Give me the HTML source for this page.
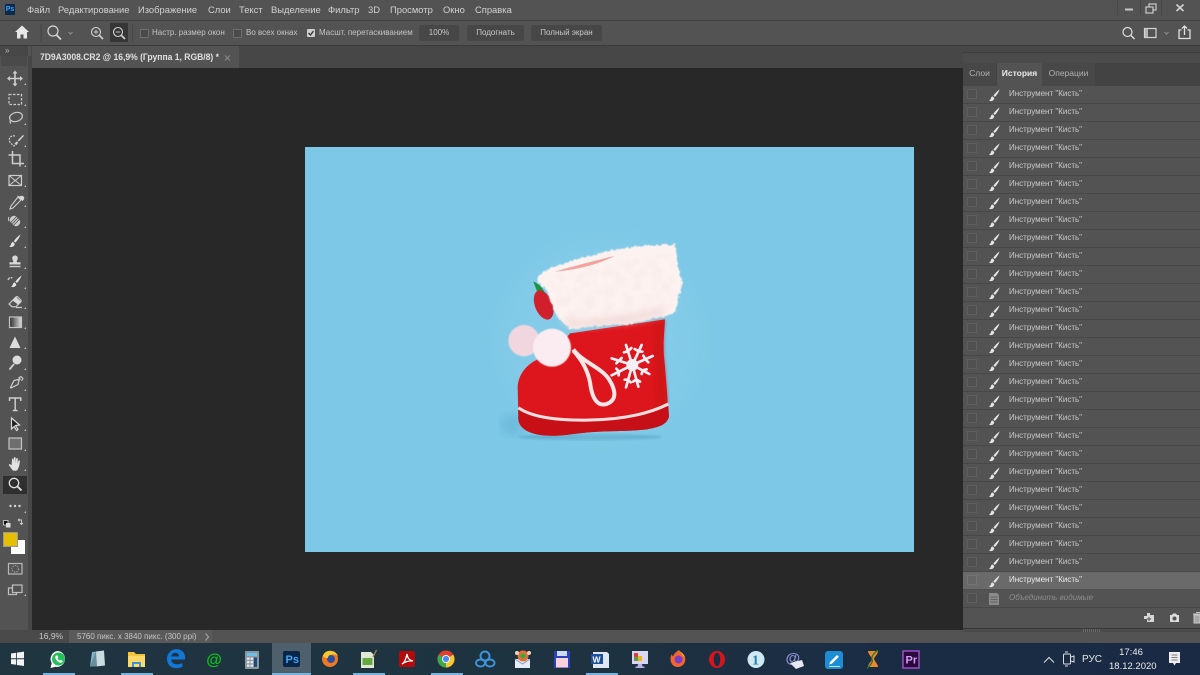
<!DOCTYPE html>
<html><head><meta charset="utf-8">
<style>
html,body{margin:0;padding:0;width:1200px;height:675px;overflow:hidden;background:#282828}
body{position:relative;font-family:"Liberation Sans","DejaVu Sans",sans-serif;color:#cfcfcf;filter:blur(.3px)}
.a{position:absolute;white-space:nowrap}
.m{top:3px;font-size:9.400px;line-height:14px;color:#d2d2d2}
.o{font-size:8px;line-height:12px;color:#c4c4c4;top:27px}
.b{top:25px;height:16px;background:#474747;border-radius:2px;font-size:8px;line-height:16px;text-align:center;color:#c8c8c8}
.cb{top:29px;width:7px;height:7px;border:1px solid #6d6d6d;background:#4a4a4a;border-radius:1px}
.r{position:relative;height:17px;border-bottom:1px solid #484848;background:#535353}
.r i{position:absolute;left:4px;top:3px;width:8px;height:8px;border:1px solid #5f5f5f;background:#505050}
.r span{position:absolute;left:46px;top:2px;font-size:8px;line-height:12px;color:#c9c9c9;font-style:normal;white-space:nowrap}
.r svg{position:absolute;left:25px;top:3px}
</style></head>
<body>
<svg width="0" height="0" style="position:absolute"><defs>
<symbol id="br" viewBox="0 0 14 14"><path d="M12.600 .4C10 2.200 7.600 4.600 5.800 7.200l1.600 1.400C9.600 6.400 11.400 3.400 12.600 .4z" fill="#e4e4e4"/><path d="M5 8C3.200 8.200 3.400 10 2.600 11.200 2.200 11.900 1.600 12.300 1.100 12.500 3 13.700 6.400 13 6.800 9.800z" fill="#e4e4e4"/></symbol>
<filter id="bl1"><feGaussianBlur stdDeviation="1.500"/></filter>
<filter id="bl2"><feGaussianBlur stdDeviation="1"/></filter>
<filter id="bl4"><feGaussianBlur stdDeviation="5"/></filter>
<filter id="bl8" x="-20%" y="-20%" width="140%" height="140%"><feGaussianBlur stdDeviation="10"/></filter>
<filter id="bl12"><feGaussianBlur stdDeviation="16"/></filter>
<filter id="fur" x="-10%" y="-10%" width="120%" height="120%"><feTurbulence type="fractalNoise" baseFrequency=".1" numOctaves="2" seed="4"/><feDisplacementMap in="SourceGraphic" scale="14" xChannelSelector="R" yChannelSelector="G"/><feGaussianBlur stdDeviation="1.500"/></filter>
<filter id="tex" x="0" y="0" width="100%" height="100%"><feTurbulence type="fractalNoise" baseFrequency=".035" numOctaves="3" seed="9"/><feColorMatrix values="0 0 0 0 .93  0 0 0 0 .78  0 0 0 0 .8  1.600 0 0 0 -.62"/><feComposite in2="SourceGraphic" operator="in"/><feGaussianBlur stdDeviation="3"/></filter>
</defs></svg>

<!-- menu bar -->
<div class="a" style="left:0;top:0;width:1200px;height:20px;background:#535353"></div>
<div class="a" style="left:5px;top:4px;width:10px;height:11px;background:#0b2a4e;border-radius:1px;font-size:7px;line-height:11px;font-weight:bold;color:#34a8ff;text-align:center">Ps</div>
<div class="a m" style="left:27px">Файл</div>
<div class="a m" style="left:58px">Редактирование</div>
<div class="a m" style="left:138px">Изображение</div>
<div class="a m" style="left:208px">Слои</div>
<div class="a m" style="left:239px">Текст</div>
<div class="a m" style="left:271px">Выделение</div>
<div class="a m" style="left:328px">Фильтр</div>
<div class="a m" style="left:368px">3D</div>
<div class="a m" style="left:390px">Просмотр</div>
<div class="a m" style="left:443px">Окно</div>
<div class="a m" style="left:475px">Справка</div>
<!-- window buttons -->
<div class="a" style="left:1117px;top:0;width:1px;height:15px;background:#474747"></div>
<div class="a" style="left:1140px;top:0;width:1px;height:15px;background:#474747"></div>
<div class="a" style="left:1161px;top:0;width:1px;height:15px;background:#474747"></div>
<svg class="a" style="left:1120px;top:0" width="80" height="16"><path d="M5 9.500h8" stroke="#c8c8c8" stroke-width="2"/><path d="M26 7h7v6h-7zM29 7V4h7v6h-3" fill="none" stroke="#c4c4c4" stroke-width="1.300"/><path d="M56.500 4.500l7 6.500M63.500 4.500l-7 6.500" stroke="#d0d0d0" stroke-width="1.700"/></svg>
<div class="a" style="left:0;top:20px;width:1200px;height:1px;background:#424242"></div>

<!-- options bar -->
<div class="a" style="left:0;top:21px;width:1200px;height:24px;background:#535353;border-bottom:1px solid #3a3a3a"></div>
<svg class="a" style="left:0;top:20px" width="140" height="25">
<path d="M15 12l7-6.500 7 6.500h-2v6.500h-3.500v-4h-3v4H17V12z" fill="#e6e6e6"/>
<path d="M41 4v18" stroke="#464646"/>
<circle cx="53" cy="11" r="5" fill="none" stroke="#d4d4d4" stroke-width="1.200"/><path d="M56.500 15l4.500 4.500" stroke="#d4d4d4" stroke-width="1.800"/>
<path d="M68.500 12l2 2 2-2" fill="none" stroke="#909090"/>
<circle cx="96" cy="12" r="4.500" fill="none" stroke="#cfcfcf" stroke-width="1.100"/><path d="M93.800 12h4.400M96 9.800v4.400" stroke="#cfcfcf" stroke-width=".9"/><path d="M99.500 15.500l3.500 3.500" stroke="#cfcfcf" stroke-width="1.600"/>
<rect x="110" y="3" width="18" height="19" fill="#363636"/>
<circle cx="118" cy="12" r="4.500" fill="none" stroke="#d2d2d2" stroke-width="1.100"/><path d="M115.800 12h4.400" stroke="#d2d2d2" stroke-width=".9"/><path d="M121.500 15.500l3.500 3.500" stroke="#d2d2d2" stroke-width="1.600"/>
<path d="M132.500 4v18" stroke="#464646"/>
</svg>
<div class="a cb" style="left:140px"></div><div class="a o" style="left:152px">Настр. размер окон</div>
<div class="a cb" style="left:233px"></div><div class="a o" style="left:246px">Во всех окнах</div>
<div class="a" style="left:307px;top:29px;width:8px;height:8px;background:#cfcfcf;border-radius:1px"></div>
<svg class="a" style="left:307px;top:29px" width="8" height="8"><path d="M1.500 4l2 2 3-4" fill="none" stroke="#333" stroke-width="1.300"/></svg>
<div class="a o" style="left:319px">Масшт. перетаскиванием</div>
<div class="a b" style="left:419px;width:40px">100%</div>
<div class="a b" style="left:467px;width:57px">Подогнать</div>
<div class="a b" style="left:531px;width:71px">Полный экран</div>
<svg class="a" style="left:1118px;top:22px" width="82" height="22">
<circle cx="9.500" cy="10" r="4.500" fill="none" stroke="#dcdcdc" stroke-width="1.200"/><path d="M13 13.500l3.500 3.500" stroke="#dcdcdc" stroke-width="1.500"/>
<rect x="26.500" y="6.500" width="11.500" height="9" fill="none" stroke="#d4d4d4" stroke-width="1.200"/><rect x="27" y="7" width="3" height="8" fill="#b5b5b5"/>
<path d="M46.500 10l2 2 2-2" fill="none" stroke="#8e8e8e"/>
<path d="M63.500 8h-2.500v8.500h11V8h-2.500M66.500 13V4M64 6.500l2.500-2.500 2.500 2.500" fill="none" stroke="#e2e2e2" stroke-width="1.300"/>
</svg>

<!-- tab strip -->
<div class="a" style="left:0;top:46px;width:1200px;height:22px;background:#474747"></div>
<div class="a" style="left:32px;top:46px;width:207px;height:22px;background:#535353"></div>
<div class="a" style="left:40px;top:51px;font-size:9px;line-height:13px;color:#e0e0e0;font-weight:bold;transform-origin:0 0;transform:scaleX(.95)">7D9A3008.CR2 @ 16,9% (Группа 1, RGB/8) *</div>
<svg class="a" style="left:223px;top:53px" width="10" height="10"><path d="M2 2.500l5 5M7 2.500l-5 5" stroke="#8a8a8a"/></svg>

<!-- left toolbar -->
<div class="a" style="left:0;top:46px;width:31px;height:584px;background:#535353"></div>
<div class="a" style="left:0;top:46px;width:28px;height:10px;background:#474747"></div>
<div class="a" style="left:5px;top:46px;font-size:8px;line-height:10px;color:#bbb">»</div>
<div class="a" style="left:1px;top:56px;width:26px;height:10px;background:#4a4a4a"></div>
<div class="a" style="left:28px;top:56px;width:4px;height:574px;background:#474747"></div>
<div class="a" style="left:3px;top:476px;width:24px;height:18px;background:#2f2f2f"></div>

<svg class="a" style="left:0;top:66px" width="30" height="560" fill="none" stroke="#cdcdcd" stroke-width="1.200">
<g transform="translate(0,-66)">
<path d="M15 72v13M8.500 78.500h13" stroke-width="1.600"/><path d="M15 70.500l-2.500 3h5zM15 86.500l-2.500-3h5zM7 78.500l3-2.500v5zM23 78.500l-3-2.500v5z" fill="#cdcdcd" stroke="none"/>
<rect x="9" y="94.500" width="12.500" height="10" stroke-dasharray="2.500 1.500"/>
<ellipse cx="16" cy="117" rx="6.500" ry="4.500" transform="rotate(-15 16 117)"/><path d="M10.500 120c-.8 1.500-.5 3 .5 3.500"/>
<path d="M15 136c-4-1-6.500 2-5.500 5 .7 2 3 4 4.500 5 1.500-1 3-2 3.500-3.500" stroke-dasharray="2 1"/><path d="M23 135l-4.500 4.500-1 2 2-.7 4.500-5z" fill="#d8d8d8" stroke="none"/><path d="M17 141.500c-1.500.5-1.500 2-3 2.500 1.800.5 3.500 0 4-1.500z" fill="#d8d8d8" stroke="none"/>
<path d="M8.500 155h11.500v11.500M12.500 151v12.500h11.500" stroke-width="1.500"/>
<rect x="9" y="175.500" width="12.500" height="10"/><path d="M9 175.500l12.500 10M21.500 175.500l-12.500 10" stroke-width="1"/>
<path d="M18 197l3 3-8 8-3 1 1-3z" stroke-width="1.100"/><path d="M17 195.500l5.500 5.500 1-1c1-1 1-2.500 0-3.500s-2.500-1-3.500 0z" fill="#d8d8d8" stroke="none"/>
<g transform="rotate(45 15 221)"><rect x="9.500" y="217" width="11" height="8" rx="3.500" fill="#cdcdcd" stroke="none"/><path d="M13 217v8M15 217v8M17 217v8" stroke="#535353" stroke-width=".8"/></g>
<path d="M9 217c-1 1.500-.5 3 0 4" stroke-width="1"/>
<g transform="translate(8,234)"><use href="#br" width="14" height="14" stroke="none"/></g>
<path d="M15 255.500c1.800 0 2.800 1.300 2.800 2.700 0 1.500-1.200 2-1 4h3.700v2.300h-11v-2.300h3.700c.2-2-1-2.500-1-4 0-1.400 1-2.700 2.800-2.700z" fill="#d8d8d8" stroke="none"/><path d="M9.500 266.500h11" stroke-width="1.400"/>
<g transform="translate(10,275)"><use href="#br" width="13" height="13" stroke="none"/></g><path d="M8 279.500c1.500-1.500 3-2 5-1.800" stroke-dasharray="2 1"/><path d="M8 280l1.500-2.500"/>
<path d="M9 304l7-7c.6-.5 1.300-.5 1.800 0l3 3c.5.600.5 1.200 0 1.800l-5 5H12z"/><path d="M16 297l5 4.500-3 3-5.500-4z" fill="#d8d8d8" stroke="none"/><path d="M16 307.500h6"/>
<defs><linearGradient id="gr"><stop offset="0" stop-color="#2a2a2a"/><stop offset="1" stop-color="#dedede"/></linearGradient></defs>
<rect x="9.500" y="317" width="12" height="10.500" fill="url(#gr)" stroke="#c4c4c4"/>
<path d="M15 336.500l5.500 11.500h-11z" fill="#dcdcdc" stroke="none"/>
<circle cx="17" cy="360" r="4.500" fill="#dcdcdc" stroke="none"/><path d="M14 364l-4.500 5.500" stroke-width="1.800"/>
<path d="M20 379l-6 1.500-3.500 7 .5.500 7-3.500 1.500-6z"/><path d="M18.500 378l2.500-1.500 2 2-1.500 2.500" stroke-width="1.100"/>
<path d="M9.500 401v-3h11.300v3M15.200 398v12.500M12.800 410.500h4.800" stroke-width="1.500"/>
<path d="M11.500 418l8 7-4 .5 2.500 4-1.500 1-2.300-4-2.700 2.500z" fill="#1e1e1e" stroke="#d8d8d8"/>
<rect x="9" y="438" width="12.500" height="11" fill="#6f6f6f" stroke="#c4c4c4"/>
<path d="M11 468c-1-1.500-2.500-2.800-2-3.500.7-.8 1.800 0 2.600 1l.4-6c.1-1.300 1.500-1.300 1.600 0l.1 3.500.2-5c.1-1.200 1.600-1.200 1.700 0l.1 5 .5-4.200c.2-1.200 1.600-1 1.600.2l-.2 4.700.8-2.800c.3-1 1.600-.7 1.500.4-.2 2.300-.7 5-1.500 6.600-.5 1.300-1 2.600-2.400 2.800H14c-1.300 0-2-1.100-3-2.700z" fill="#e2e2e2" stroke="none"/>
<circle cx="14" cy="483" r="4.700" stroke="#e0e0e0" stroke-width="1.300"/><path d="M17.500 486.500l4 4" stroke="#e0e0e0" stroke-width="1.900"/>
<circle cx="10.500" cy="506" r="1.200" fill="#d4d4d4" stroke="none"/><circle cx="15" cy="506" r="1.200" fill="#d4d4d4" stroke="none"/><circle cx="19.500" cy="506" r="1.200" fill="#d4d4d4" stroke="none"/>
<rect x="3.500" y="520.500" width="4.500" height="4.500" fill="#111" stroke="#ddd" stroke-width=".8"/><rect x="6" y="523" width="4.500" height="4.500" fill="#ddd" stroke="none"/>
<path d="M18 520h3.500v4M20 523l1.500 1.500 1.500-1.500M18 520l1.500-1.200M18 520l1.500 1.200" stroke-width=".9" stroke="#cfcfcf"/>
<rect x="8.500" y="563.500" width="13.500" height="10.500" stroke="#b8b8b8"/><circle cx="15.200" cy="568.800" r="3.300" stroke="#999" stroke-dasharray="1.500 1"/>
<rect x="12.500" y="585" width="9.500" height="7.500" stroke="#c0c0c0"/><path d="M12 588H8.500v6.500h8v-2" stroke="#c0c0c0"/>
<g fill="#bdbdbd" stroke="none">
<path d="M26 83v2h-2zM26 104v2h-2zM26 123v2h-2zM26 145v2h-2zM26 165v2h-2zM26 185v2h-2zM26 205v2h-2zM26 226v2h-2zM26 246v2h-2zM26 267v2h-2zM26 287v2h-2zM26 307v2h-2zM26 327v2h-2zM26 347v2h-2zM26 368v2h-2zM26 389v2h-2zM26 409v2h-2zM26 429v2h-2zM26 449v2h-2zM26 469v2h-2zM26 511v2h-2zM26 594v2h-2z"/>
</g>
</g>
</svg>
<div class="a" style="left:11px;top:540px;width:14px;height:14px;background:#fff"></div>
<div class="a" style="left:3px;top:532px;width:13px;height:13px;background:#e6bf05;border:1px solid #999"></div>

<!-- canvas -->
<div class="a" style="left:32px;top:68px;width:1168px;height:562px;background:#282828"></div>
<div class="a" style="left:305px;top:147px;width:609px;height:405px;background:#7cc8e6;overflow:hidden"></div>

<!-- boot -->
<svg class="a" style="left:305px;top:147px" width="609" height="405" viewBox="305 147 609 405">
<ellipse cx="590" cy="437" rx="72" ry="3" fill="#3c88b0" opacity=".4" filter="url(#bl2)"/>
<ellipse cx="512" cy="425" rx="11" ry="11" fill="#5aa5cb" opacity=".4" filter="url(#bl4)"/>
<ellipse cx="600" cy="340" rx="100" ry="100" fill="#8ed0eb" opacity=".4" filter="url(#bl12)"/>
<g transform="translate(490,230) scale(.33333)">
 <path d="M130 155l22 25-22 42 12-35z" fill="#2a9a48"/>
 <path d="M130 155c22 8 38 30 42 58l-18-14z" fill="#1f9040"/>
 <ellipse cx="161" cy="225" rx="26" ry="46" fill="#d0202c" transform="rotate(-22 161 225)"/>
 <path d="M240 310L525 268C522 320 518 350 524 400C528 450 532 490 533 520L537 560C530 585 505 592 470 598C400 606 340 600 250 612C200 620 150 620 115 605C95 595 83 580 85 560L83 470C85 440 100 415 130 395C170 375 215 345 240 310z" fill="#dc141c" filter="url(#bl2)"/>
 <path d="M525 268C522 320 518 350 524 400C528 450 532 490 533 520L500 535C505 450 490 360 490 275z" fill="#c81219" opacity=".55" filter="url(#bl4)"/>
 <path d="M85 540C130 570 220 578 300 576C400 574 480 556 535 528L537 560C530 585 505 592 470 598C400 606 340 600 250 612C200 620 150 620 115 605C95 595 83 580 85 560z" fill="#c70f18"/>
 <path d="M85 533C130 565 220 572 300 570C400 568 480 550 535 522" fill="none" stroke="#fadfe0" stroke-width="9"/>
 <!-- rope -->
 <path d="M250 358C275 395 330 410 355 445C378 480 382 510 350 522C322 530 308 505 302 470C298 435 285 400 250 362" fill="none" stroke="#fbe6e8" stroke-width="12"/>
 <!-- snowflake -->
 <g stroke="#f3eff5" stroke-width="8" fill="none" stroke-linecap="round">
  <path d="M427 405L408 345M414 364l-12 3M414 364l10-10"/>
  <path d="M427 405L455 345M446 364l-12-7M446 364l11 1"/>
  <path d="M427 405L488 378M466 388l-6-11M466 388l9 9"/>
  <path d="M427 405L478 432M458 421l-3 11M458 421l12-3"/>
  <path d="M427 405L445 470M439 448l-10 7M439 448l11 7"/>
  <path d="M427 405L408 472M414 449l-10 0M414 449l8 8"/>
  <path d="M427 405L365 436M387 425l-8-9M387 425l-1 11"/>
  <path d="M427 405L365 385M387 392l8-8M387 392l-8 8"/>
 </g>
 <circle cx="427" cy="405" r="18" fill="#f3eff5"/>
 <!-- fur -->
 <path d="M145 135c40-30 110-45 195-68 70-18 140-22 215-25l14 90 9 28-22 88-35 12-100 22-120 8-60 8-40-35-30-80-25-25z" fill="#fcf2f0" filter="url(#fur)"/>
 <path d="M195 125c50-15 110-30 180-48-45 25-110 42-180 48z" fill="#f0847c" opacity=".7" filter="url(#bl2)"/>
 <path d="M175 140c60-18 150-40 370-70l15 150-25 30-100 22-140 15-60-5-30-50z" fill="#f8dcd9" filter="url(#tex)" opacity=".75"/>
 <path d="M215 265c80 5 190-5 310-35l-3 28-100 22-130 12-55 4z" fill="#ecd0cc" opacity=".55" filter="url(#bl8)"/>
 <!-- pompoms -->
 <circle cx="102" cy="332" r="47" fill="#f2d6df" filter="url(#bl1)"/>
 <circle cx="186" cy="353" r="57" fill="#fbecf1" filter="url(#bl1)"/>
</g>
</svg>

<!-- status bar -->
<div class="a" style="left:32px;top:630px;width:1168px;height:13px;background:#535353"></div>
<div class="a" style="left:0;top:630px;width:32px;height:13px;background:#4a4a4a"></div>
<div class="a" style="left:32px;top:630px;width:37px;height:13px;background:#4a4a4a;font-size:8.500px;line-height:13px;color:#c8c8c8;padding-left:7px;box-sizing:border-box">16,9%</div>
<div class="a" style="left:69px;top:630px;width:143px;height:13px;background:#5a5a5a;font-size:8px;line-height:13px;color:#c4c4c4;padding-left:8px;box-sizing:border-box">5760 пикс. x 3840 пикс. (300 ppi)</div>
<svg class="a" style="left:203px;top:632px" width="8" height="10"><path d="M2.500 1.500l3 3.500-3 3.500" fill="none" stroke="#a8a8a8"/></svg>

<!-- history panel -->
<div class="a" style="left:963px;top:52px;width:237px;height:580px;background:#4b4b4b;border-top:1px solid #3e3e3e;box-sizing:border-box"></div>
<div class="a" style="left:963px;top:63px;width:237px;height:23px;background:#434343"></div>
<div class="a" style="left:963px;top:63px;width:33px;height:23px;background:#474747;font-size:8.500px;line-height:21px;color:#b0b0b0;text-align:center">Слои</div>
<div class="a" style="left:997px;top:63px;width:45px;height:23px;background:#535353;font-size:8.500px;line-height:21px;font-weight:bold;color:#eaeaea;text-align:center">История</div>
<div class="a" style="left:1042px;top:63px;width:53px;height:23px;background:#484848;font-size:8.500px;line-height:21px;color:#b0b0b0;text-align:center">Операции</div>
<div class="a" style="left:963px;top:86px;width:237px">
<div class="r"><i></i><svg width="13" height="13"><use href="#br"/></svg><span>Инструмент "Кисть"</span></div>
<div class="r"><i></i><svg width="13" height="13"><use href="#br"/></svg><span>Инструмент "Кисть"</span></div>
<div class="r"><i></i><svg width="13" height="13"><use href="#br"/></svg><span>Инструмент "Кисть"</span></div>
<div class="r"><i></i><svg width="13" height="13"><use href="#br"/></svg><span>Инструмент "Кисть"</span></div>
<div class="r"><i></i><svg width="13" height="13"><use href="#br"/></svg><span>Инструмент "Кисть"</span></div>
<div class="r"><i></i><svg width="13" height="13"><use href="#br"/></svg><span>Инструмент "Кисть"</span></div>
<div class="r"><i></i><svg width="13" height="13"><use href="#br"/></svg><span>Инструмент "Кисть"</span></div>
<div class="r"><i></i><svg width="13" height="13"><use href="#br"/></svg><span>Инструмент "Кисть"</span></div>
<div class="r"><i></i><svg width="13" height="13"><use href="#br"/></svg><span>Инструмент "Кисть"</span></div>
<div class="r"><i></i><svg width="13" height="13"><use href="#br"/></svg><span>Инструмент "Кисть"</span></div>
<div class="r"><i></i><svg width="13" height="13"><use href="#br"/></svg><span>Инструмент "Кисть"</span></div>
<div class="r"><i></i><svg width="13" height="13"><use href="#br"/></svg><span>Инструмент "Кисть"</span></div>
<div class="r"><i></i><svg width="13" height="13"><use href="#br"/></svg><span>Инструмент "Кисть"</span></div>
<div class="r"><i></i><svg width="13" height="13"><use href="#br"/></svg><span>Инструмент "Кисть"</span></div>
<div class="r"><i></i><svg width="13" height="13"><use href="#br"/></svg><span>Инструмент "Кисть"</span></div>
<div class="r"><i></i><svg width="13" height="13"><use href="#br"/></svg><span>Инструмент "Кисть"</span></div>
<div class="r"><i></i><svg width="13" height="13"><use href="#br"/></svg><span>Инструмент "Кисть"</span></div>
<div class="r"><i></i><svg width="13" height="13"><use href="#br"/></svg><span>Инструмент "Кисть"</span></div>
<div class="r"><i></i><svg width="13" height="13"><use href="#br"/></svg><span>Инструмент "Кисть"</span></div>
<div class="r"><i></i><svg width="13" height="13"><use href="#br"/></svg><span>Инструмент "Кисть"</span></div>
<div class="r"><i></i><svg width="13" height="13"><use href="#br"/></svg><span>Инструмент "Кисть"</span></div>
<div class="r"><i></i><svg width="13" height="13"><use href="#br"/></svg><span>Инструмент "Кисть"</span></div>
<div class="r"><i></i><svg width="13" height="13"><use href="#br"/></svg><span>Инструмент "Кисть"</span></div>
<div class="r"><i></i><svg width="13" height="13"><use href="#br"/></svg><span>Инструмент "Кисть"</span></div>
<div class="r"><i></i><svg width="13" height="13"><use href="#br"/></svg><span>Инструмент "Кисть"</span></div>
<div class="r"><i></i><svg width="13" height="13"><use href="#br"/></svg><span>Инструмент "Кисть"</span></div>
<div class="r"><i></i><svg width="13" height="13"><use href="#br"/></svg><span>Инструмент "Кисть"</span></div>
<div class="r" style="background:#6a6a6a;border-bottom-color:#505050"><i style="background:#666;border-color:#757575"></i><svg width="13" height="13"><use href="#br"/></svg><span style="color:#ececec">Инструмент "Кисть"</span></div>
<div class="r"><i></i><svg width="13" height="13"><path d="M1 0h8l2 2v10H1z" fill="#8a8a8a"/><path d="M2.500 4h7M2.500 6.500h7M2.500 9h7" stroke="#636363"/></svg><span style="font-style:italic;color:#8d8d8d">Объединить видимые</span></div>
</div>
<div class="a" style="left:963px;top:608px;width:237px;height:20px;background:#535353"></div>
<div class="a" style="left:963px;top:628px;width:237px;height:1px;background:#383838"></div>
<svg class="a" style="left:1140px;top:610px" width="60" height="15">
<path d="M4 6h3V3h3v2h4v7H7v-3H4z" fill="#d6d6d6"/><path d="M9 7v4M7 9h4" stroke="#535353"/>
<path d="M30 5h2l1-1.500h3L37 5h2v7h-9z" fill="#dcdcdc"/><circle cx="34.500" cy="8.500" r="2" fill="#535353"/>
<path d="M54 5h6v8h-6zM53 4h7M56 2.500h4" stroke="#c8c8c8" fill="#a8a8a8" stroke-width="1"/>
</svg>
<div class="a" style="left:1083px;top:629px;width:17px;height:3px;background:repeating-linear-gradient(90deg,#6b6b6b 0 1px,#474747 1px 2px)"></div>

<!-- taskbar -->
<div class="a" style="left:0;top:643px;width:1200px;height:32px;background:linear-gradient(90deg,#1f3540 0,#1e3340 45%,#1a2c44 75%,#1a2a45 100%)"></div>
<div class="a" style="left:272px;top:643px;width:39px;height:32px;background:#4d606c"></div>
<div class="a" style="left:43px;top:673px;width:32px;height:2px;background:#75b3e0"></div>
<div class="a" style="left:121px;top:673px;width:32px;height:2px;background:#75b3e0"></div>
<div class="a" style="left:272px;top:673px;width:39px;height:2px;background:#75b3e0"></div>
<div class="a" style="left:353px;top:673px;width:32px;height:2px;background:#75b3e0"></div>
<div class="a" style="left:431px;top:673px;width:32px;height:2px;background:#75b3e0"></div>
<div class="a" style="left:586px;top:673px;width:32px;height:2px;background:#75b3e0"></div>

<svg class="a" style="left:0;top:643px" width="960" height="32">
<path d="M11 10.500l5.200-.8v5.600H11zM17 9.600l7-1v6.700h-7zM11 16.200h5.200v5.600l-5.200-.8zM17 16.200h7v6.800l-7-1z" fill="#f2f2f2"/>
<path d="M58.500 8a8 8 0 0 0-6.800 12.100L50.500 25l5-1.200A8 8 0 1 0 58.500 8z" fill="#fff"/><circle cx="58.500" cy="16" r="6.500" fill="#25c05a"/><path d="M55.700 12.800c-1 1.500 0 3.800 1.500 5.200 1.500 1.400 3.500 2.200 4.800 1.400l.8-1.300-2-1.200-.8.800c-1-.5-2-1.500-2.500-2.500l.8-.8-1-2.200z" fill="#fff"/>
<path d="M92 9l10-1-1 14-11 1.500z" fill="#7fb3c8"/><path d="M96 8.500l8-1 1 15-9 1z" fill="#c9dde0"/><path d="M90 23.500l6-15 1 15z" fill="#6a8b98"/>
<path d="M128 9h6l2 2h9v13h-17z" fill="#f4c33c"/><rect x="128" y="13" width="17" height="11" fill="#fbd867"/><path d="M132 19h9v5h-2v-3h-5v3h-2z" fill="#3b94d9"/>
<path d="M183.500 17.500h-11.800c.3 3 2.600 4.900 5.700 4.900 2 0 4-.5 5.500-1.500v3.800c-1.800 1-3.900 1.400-6 1.400-5.700 0-9.400-3.800-9.400-9 0-5.500 4-10 9.600-10 5 0 8.500 3.500 8.500 8.500v1.900zm-4-3c0-2-1.300-3.700-3.500-3.700-2.100 0-3.900 1.500-4.300 3.700z" fill="#1277d6" transform="translate(-.5,-1)"/>
<text x="206" y="22" font-family="Liberation Sans" font-size="16" font-weight="bold" font-style="italic" fill="#10c21c">@</text>
<rect x="245" y="8" width="14" height="18" rx="1" fill="#8d979f"/><rect x="247" y="10" width="10" height="3" fill="#6cc0ee"/><g fill="#e3e7ea"><rect x="247" y="14.500" width="2.500" height="2.300"/><rect x="250.500" y="14.500" width="2.500" height="2.300"/><rect x="247" y="18" width="2.500" height="2.300"/><rect x="250.500" y="18" width="2.500" height="2.300"/><rect x="247" y="21.500" width="2.500" height="2.300"/><rect x="250.500" y="21.500" width="2.500" height="2.300"/></g><rect x="254" y="14.500" width="3" height="9.300" fill="#1b4b86"/>
<rect x="283" y="8" width="17" height="16" rx="2" fill="#0a2647"/><text x="285.500" y="20" font-family="Liberation Sans" font-size="11" font-weight="bold" fill="#33a9ff">Ps</text>
<circle cx="330" cy="16" r="8" fill="#f17722"/><circle cx="331" cy="16" r="4" fill="#2d4f9e"/><path d="M323 13c1-4 5-6 9-5 3 .5 5 2.500 6 5-3-2-5-2-7-1-2 0-3 1-3 3-2 0-4-.5-5-2z" fill="#f9c62e"/>
<path d="M361 9h10l3 3v13h-13z" fill="#dfe8d7"/><rect x="362.500" y="15" width="10" height="7" fill="#66a840"/><path d="M373 14l3.500-7" stroke="#b0833c" stroke-width="1.300"/>
<rect x="399" y="8" width="16" height="16" rx="2" fill="#b30b0b"/><path d="M402 21c2-1 4-5 5-10 .5 4 2 6 6 7-4-.5-8 1-11 3z" fill="none" stroke="#fff" stroke-width="1.300"/>
<circle cx="446" cy="16" r="8.500" fill="#e0402f"/><path d="M446 24.500a8.500 8.500 0 0 0 7.400-12.700l-7.400 4.200z" fill="#f5c92f"/><path d="M446 24.500a8.500 8.500 0 0 1-7.400-4.300 8.500 8.500 0 0 1 0-8.400l7.400 4.200z" fill="#3ea84b"/><circle cx="446" cy="16" r="4" fill="#fff"/><circle cx="446" cy="16" r="3.100" fill="#4a8cf0"/>
<g fill="none" stroke="#3d95dc" stroke-width="1.900"><circle cx="485" cy="13" r="4.500"/><ellipse cx="480.500" cy="20" rx="4.500" ry="3.500"/><ellipse cx="490" cy="20" rx="4.500" ry="3.500"/></g>
<rect x="515" y="16" width="15" height="9" fill="#e7ecf2"/><path d="M515 16l7.500 5 7.500-5" stroke="#7b9fcc" fill="none"/><circle cx="523" cy="13" r="5.500" fill="#e76f36"/><circle cx="523" cy="13" r="2.500" fill="#2fae3b"/><circle cx="517" cy="10" r="2" fill="#f3d1b8"/><circle cx="529" cy="10" r="2" fill="#f3d1b8"/>
<rect x="554" y="8" width="16" height="17" fill="#2a44b8"/><rect x="557" y="8" width="10" height="5" fill="#cfd9f5"/><rect x="556" y="15" width="12" height="9.500" fill="#fbd1da"/>
<path d="M593 9h14l2 2v14h-16z" fill="#dfe7f2"/><rect x="591" y="11" width="12" height="10" fill="#1d4f9c"/><text x="592.500" y="19.500" font-family="Liberation Sans" font-size="8.500" font-weight="bold" fill="#fff">W</text>
<rect x="632" y="8" width="16" height="13" fill="#d8d6f2"/><rect x="634" y="10" width="4" height="4" fill="#df3e2d"/><rect x="638" y="13" width="4" height="5" fill="#e7b720"/><rect x="634" y="14" width="4" height="4" fill="#56a04a"/><path d="M638 21h4l.5 2.500h2v1.500h-9v-1.500h2z" fill="#b7b2e8"/>
<path d="M679 7c1 2 4 3 5.500 6 2 4 .5 9.500-5.500 11-6 .5-8.500-4-8.500-8 0-2 .5-3.500 1.500-5 0 1.500.5 2 1.200 2.500C673.500 11 676 9 679 7z" fill="#f6642c"/><path d="M679 7c1 2 4 3 5.500 6 .5 2-.5 1-2-1z" fill="#fbbd2e"/><circle cx="678.500" cy="16.500" r="4" fill="#7a3fc8"/>
<ellipse cx="717" cy="16.500" rx="8" ry="8.500" fill="#d5151d"/><ellipse cx="717" cy="16.500" rx="3.300" ry="6.700" fill="#1c2c42"/>
<circle cx="756" cy="16.500" r="8.500" fill="#cfe8f2"/><text x="752" y="21.500" font-family="Liberation Serif" font-size="14" font-weight="bold" fill="#1f7fb4">1</text>
<text x="785.500" y="20" font-family="Liberation Sans" font-size="15" font-weight="bold" fill="#8e8fd6">@</text><path d="M790 20l12-3 2 6-8 3z" fill="#e9e9f4"/>
<rect x="825" y="8" width="18" height="18" rx="3" fill="#1e8ed4"/><path d="M830 19l7-7 1.800 1.800-7 7-2.500.7z" fill="#fff"/><path d="M829 23.500h11" stroke="#bfe3f8"/>
<path d="M868 8h10c0 3-3 5-4 8 1 3 4 5 4 8h-10c0-3 3-5 4-8-1-3-4-5-4-8z" fill="#f0882a"/><path d="M878 7c-5 4-7 7-6 9.500 1 2.500-1 5-5 9" fill="none" stroke="#147a2e" stroke-width="1.300"/>
<rect x="903" y="8" width="16" height="17" fill="#2a0a3c" stroke="#a84fd0" stroke-width="1.400"/><text x="905.500" y="20.500" font-family="Liberation Sans" font-size="11" font-weight="bold" fill="#d59cf5">Pr</text>
</svg>
<svg class="a" style="left:1040px;top:643px" width="40" height="32" fill="none" stroke="#dcdcdc">
<path d="M4 19.500l5-5 5 5" stroke-width="1.100"/>
<rect x="23.500" y="11" width="7" height="10" rx="1"/><path d="M31 14l3-1v6l-3-1M25 9h3M25 23h3"/>
</svg>
<div class="a" style="left:1082px;top:653px;font-size:10px;line-height:13px;color:#e4e4e4">РУС</div>
<div class="a" style="left:1109px;top:646px;width:44px;text-align:center;font-size:9.500px;line-height:13px;color:#ececec">17:46</div>
<div class="a" style="left:1109px;top:660px;width:44px;text-align:center;font-size:9.500px;line-height:13px;color:#ececec">18.12.2020</div>
<svg class="a" style="left:1167px;top:650px" width="16" height="18"><path d="M2 2h11v11H9l-1.500 2.500L6 13H2z" fill="#eee"/><path d="M4.500 5h6M4.500 7.500h6M4.500 10h6" stroke="#556" stroke-width=".8"/></svg>
</body></html>
